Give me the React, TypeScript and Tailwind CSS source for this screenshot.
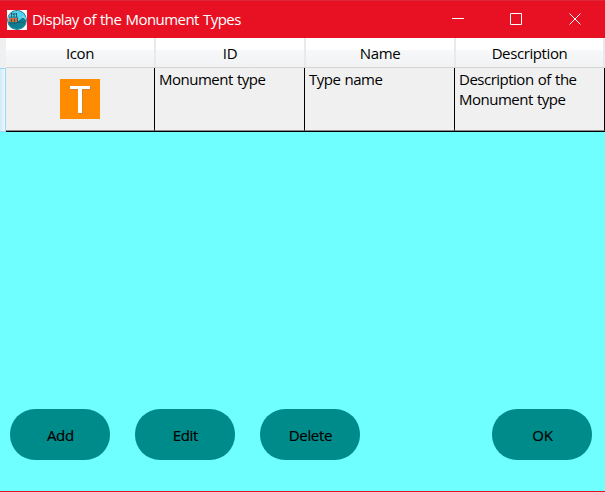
import React from "react";

const columns = ["Icon", "ID", "Name", "Description"];

function AppIcon() {
  return (
    <svg className="h-5 w-5 shrink-0" viewBox="0 0 20 20">
      <rect width="20" height="20" fill="#fff" />
      <circle cx="10" cy="10" r="9.9" fill="#2b5c6c" />
      <circle cx="10" cy="10" r="9.3" fill="#4bd5f3" />
      <path d="M1 11.500h10l5-3.500 3 3c-.5 5-4 8-9 8s-8.500-3-9-7.500Z" fill="#0c7f90" />
      <path d="M2 8h9v4H2Z" fill="#d0703f" />
      <path d="M4 4h6M4.500 3v4M7 3v4m2.500-4v4M2 7.200h9M4.500 9v3m3-3v3m3-4v4" stroke="#2a4650" strokeWidth=".8" />
      <path d="m11 12 5-4 3 3M2 13q4 2 8 0t8 0" fill="none" stroke="#1c5263" strokeWidth=".7" />
      <circle cx="16" cy="7" r=".8" fill="#e7d491" />
    </svg>
  );
}

function TitleBar() {
  return (
    <header className="flex h-[38px] shrink-0 items-center border-t border-[#df2638] bg-[#e81123] pl-[7px] text-white">
      <AppIcon />
      <span className="ml-[5px] grow whitespace-nowrap pb-px text-[15px] leading-5 tracking-[-0.55px] [word-spacing:0.8px]">
        Display of the Monument Types
      </span>
      <svg className="h-[14px] w-[129px] shrink-0" viewBox="0 0 129 14" fill="none" stroke="white">
        <path d="M0 5.500h12M58.500 .5h11v11h-11ZM117.500 .5l11 11m0-11-11 11" />
      </svg>
      <span className="w-6 shrink-0" />
    </header>
  );
}

function PillButton({ label }: { label: string }) {
  return (
    <button className="flex h-[51px] w-[100px] shrink-0 items-center justify-center rounded-[25px] bg-[#008b8b] pt-[2px] text-[15px] font-medium tracking-[-0.35px] text-black [-webkit-text-stroke:0.2px_black]">
      {label}
    </button>
  );
}

function Cell({ children }: { children: React.ReactNode }) {
  return (
    <div className="border-b border-r border-b-[#8c8c8c] border-r-black pl-1 pt-px">
      {children}
    </div>
  );
}

function Table() {
  return (
    <section className="flex h-[94px] shrink-0">
      <div className="flex w-[6px] shrink-0 flex-col">
        <div className="h-[30px] bg-[#f0f0f0]" />
        <div className="h-[64px] border-y border-r border-[#98d9f5] bg-gradient-to-r from-[#d2e9f7] to-[#eef8fd]" />
      </div>
      <div className="min-w-0 grow">
        <div className="grid h-[30px] grid-cols-[150px_150px_150px_149px] border-b border-[#d5d5d5] bg-[linear-gradient(to_bottom,#fff_0px,#fff_12px,#f7f8fa_12px,#f1f2f4_29px)]">
          {columns.map((label) => (
            <div key={label} className="flex items-center justify-center border-r-2 border-[#e8e9eb] pt-px text-[15px] leading-5 tracking-[-0.4px]">
              {label}
            </div>
          ))}
        </div>
        <div className="grid h-[64px] grid-cols-[149px_150px_150px_150px] border-b border-black bg-[#f0f0f0] text-[15px] leading-5 tracking-[-0.5px] [word-spacing:0.8px]">
          <div className="flex justify-center border-b border-r border-b-[#8c8c8c] border-r-black pt-[11px]">
            <svg className="h-10 w-10" viewBox="0 0 40 40">
              <rect width="40" height="40" fill="#ff8c00" />
              <path d="M11 8h20v3h-8v24h-4V11h-8Z" fill="#cf8230" />
              <path d="M10 7h20v3h-8v24h-4V10h-8Z" fill="#fff" />
            </svg>
          </div>
          <Cell>Monument type</Cell>
          <Cell>Type name</Cell>
          <Cell>Description of the<br />Monument type</Cell>
        </div>
      </div>
    </section>
  );
}

export default function App() {
  return (
    <main className="flex h-[492px] w-[605px] flex-col overflow-hidden border-b border-[#e81123] bg-[#70ffff] font-['Open_Sans','Noto_Sans',sans-serif] text-black">
      <TitleBar />
      <Table />
      <div className="grow" />
      <footer className="flex h-[82px] shrink-0 items-start gap-[25px] pl-[10.400px] pr-[12.600px]">
        <PillButton label="Add" />
        <PillButton label="Edit" />
        <PillButton label="Delete" />
        <div className="ml-auto"><PillButton label="OK" /></div>
      </footer>
    </main>
  );
}
